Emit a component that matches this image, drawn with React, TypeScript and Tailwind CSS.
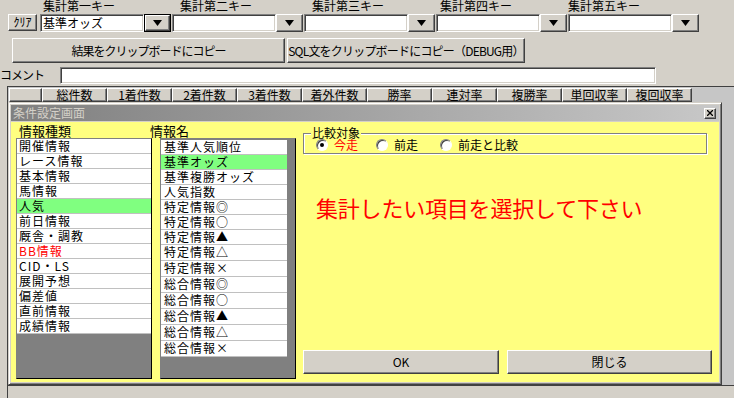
import React from "react";

const raised =
  "border border-t-white border-l-white border-r-[#404040] border-b-[#404040] shadow-[inset_-1px_-1px_0_#808080] bg-[#d4d0c8]";
const sunken =
  "border border-t-[#808080] border-l-[#808080] border-r-white border-b-white shadow-[inset_1px_1px_0_#404040,inset_-1px_-1px_0_#d4d0c8]";

const keys = [
  { label: "集計第一キー", pad: "pl-[3px]", value: "基準オッズ", focused: true },
  { label: "集計第二キー", pad: "pl-[8px]", value: "", focused: false },
  { label: "集計第三キー", pad: "pl-[8px]", value: "", focused: false },
  { label: "集計第四キー", pad: "pl-[4px]", value: "", focused: false },
  { label: "集計第五キー", pad: "pl-0", value: "", focused: false },
];

const headers = ["総件数", "1着件数", "2着件数", "3着件数", "着外件数", "勝率", "連対率", "複勝率", "単回収率", "複回収率"];

const kinds = ["開催情報", "レース情報", "基本情報", "馬情報", "人気", "前日情報", "厩舎・調教", "BB情報", "CID・LS", "展開予想", "偏差値", "直前情報", "成績情報"];

const names = [
  "基準人気順位", "基準オッズ", "基準複勝オッズ", "人気指数",
  "特定情報◎", "特定情報○", "特定情報▲", "特定情報△", "特定情報×",
  "総合情報◎", "総合情報○", "総合情報▲", "総合情報△", "総合情報×",
];

function Arrow() {
  return (
    <svg width="9" height="7" viewBox="0 0 9 7">
      <polygon points="0,0 9,0 4.5,6" fill="#000" />
    </svg>
  );
}

function Combo({ value, focused }: { value: string; focused: boolean }) {
  return (
    <div className="flex h-[18px] w-[131px]">
      <div className={`w-[104px] bg-white ${sunken} text-[12px] leading-[15px] pl-[2px] whitespace-nowrap`}>
        {value}
      </div>
      {focused ? (
        <div className="w-[27px] border border-black">
          <div className={`h-full flex items-center justify-center ${raised}`}>
            <Arrow />
          </div>
        </div>
      ) : (
        <div className={`w-[27px] flex items-center justify-center ${raised}`}>
          <Arrow />
        </div>
      )}
    </div>
  );
}

function Radio({ label, checked, red, width }: { label: string; checked?: boolean; red?: boolean; width: string }) {
  return (
    <div className={`flex items-center ${width}`}>
      <div className="w-[12px] h-[12px] rounded-full border border-t-[#808080] border-l-[#808080] border-r-white border-b-white bg-white flex items-center justify-center shadow-[inset_1px_1px_0_#404040]">
        {checked && <div className="w-[4px] h-[4px] rounded-full bg-black" />}
      </div>
      <span className={`ml-[6px] text-[12px] leading-[13px] ${red ? "text-[#ff0000]" : "text-black"}`}>{label}</span>
    </div>
  );
}

export default function App() {
  return (
    <div className="relative w-[734px] h-[398px] overflow-hidden bg-[#d4d0c8] text-black font-['Noto_Sans_CJK_JP',sans-serif]">
      {/* key labels */}
      <div className="flex h-[14px] pl-[40px] gap-[1px]">
        {keys.map((k) => (
          <div key={k.label} className={`w-[131px] ${k.pad} text-[12px] leading-[12px]`}>
            {k.label}
          </div>
        ))}
      </div>

      {/* combos */}
      <div className="flex h-[18px] pl-[8px]">
        <div className={`w-[29px] h-[17px] ${raised} text-[12px] leading-[14px] flex justify-center`}>ｸﾘｱ</div>
        <div className="flex gap-[1px] ml-[3px]">
          {keys.map((k) => (
            <Combo key={k.label} value={k.value} focused={k.focused} />
          ))}
        </div>
      </div>

      {/* copy buttons */}
      <div className="flex mt-[6px] h-[25px] pl-[12px] gap-[2px]">
        <div className={`w-[273px] ${raised} flex items-center justify-center text-[12px] tracking-[-1px]`}>
          結果をクリップボードにコピー
        </div>
        <div className={`w-[238px] ${raised} flex items-center justify-center text-[12px] tracking-[-0.8px]`}>
          SQL文をクリップボードにコピー（DEBUG用）
        </div>
      </div>

      {/* comment */}
      <div className="flex mt-[4px] h-[17px]">
        <div className="w-[60px] text-[12px] leading-[14px] tracking-[-1px] pt-[1px]">コメント</div>
        <div className={`w-[596px] bg-white ${sunken}`} />
      </div>

      {/* grid */}
      <div className="mt-[2px] ml-[7px] h-[299px] border-l border-t border-[#404040] bg-[#c6c6c6] pt-[1px] pl-[1px]">
        <div className="flex h-[14px]">
          <div className={`w-[33px] ${raised}`} />
          {headers.map((h) => (
            <div key={h} className={`w-[65px] ${raised} flex items-center justify-center text-[12px] leading-[12px]`}>
              {h}
            </div>
          ))}
        </div>
      </div>
      <div className="ml-[7px] h-[14px] border-l border-t border-[#404040] bg-[#d4d0c8]" />

      {/* dialog */}
      <div className="absolute left-[8px] top-[102px] w-[714px] h-[283px] flex flex-col border border-t-[#d4d0c8] border-l-[#d4d0c8] border-r-[#404040] border-b-[#404040] shadow-[inset_1px_1px_0_#fff,inset_-1px_-1px_0_#808080] p-[2px] bg-[#d4d0c8]">
        <div className="h-[16px] flex items-center bg-gradient-to-r from-[#808080] to-[#c8c8c8] pl-[2px] pr-[3px]">
          <span className="text-[12px] leading-[14px] text-[#d4d0c8] flex-1">条件設定画面</span>
          <div className={`w-[12px] h-[11px] ${raised} flex items-center justify-center`}>
            <svg width="6" height="6" viewBox="0 0 6 6">
              <path d="M0 0L6 6M6 0L0 6" stroke="#000" strokeWidth="1.3" />
            </svg>
          </div>
        </div>
        <div className="mt-[1px] flex-1 bg-[#ffff80] flex pl-[5px] pt-[2px]">
          {/* 情報種類 */}
          <div className="w-[136px] flex flex-col">
            <div className="h-[14px] pl-[3px] text-[13px] leading-[14px]">情報種類</div>
            <div className="h-[241px] border border-t-[#808080] border-l-[#808080] border-r-black border-b-black bg-[#808080]">
              {kinds.map((k) => (
                <div
                  key={k}
                  className={`h-[15px] w-[134px] border-b border-[#c0c0c0] pl-[2px] text-[12px] leading-[14px] tracking-[1px] ${
                    k === "人気" ? "bg-[#80ff80]" : "bg-white"
                  } ${k === "BB情報" ? "text-[#ff0000]" : "text-black"}`}
                >
                  {k}
                </div>
              ))}
            </div>
          </div>

          {/* 情報名 */}
          <div className="w-[136px] ml-[8px] flex flex-col">
            <div className="h-[14px] -ml-[10px] text-[13px] leading-[14px]">情報名</div>
            <div className="h-[241px] border border-t-[#808080] border-l-[#808080] border-r-black border-b-black bg-[#808080] pt-[1px]">
              {names.map((n, i) => (
                <div
                  key={n}
                  className={`${i < 7 ? "h-[15px]" : "h-[16px]"} w-[126px] border-b border-[#c0c0c0] pl-[3px] text-[12px] leading-[14px] tracking-[1px] ${
                    n === "基準オッズ" ? "bg-[#80ff80]" : "bg-white"
                  }`}
                >
                  {n}
                </div>
              ))}
            </div>
          </div>

          {/* right panel */}
          <div className="w-[409px] ml-[7px] flex flex-col">
            <div className="relative mt-[9px] h-[21px] w-[404px] border border-[#808080] shadow-[inset_1px_1px_0_#fff,1px_1px_0_#fff]">
              <span className="absolute -top-[8px] left-[7px] px-[1px] bg-[#ffff80] text-[12px] leading-[13px]">比較対象</span>
              <div className="flex items-center h-full pl-[12px] pt-[2px]">
                <Radio label="今走" checked red width="w-[60px]" />
                <Radio label="前走" width="w-[64px]" />
                <Radio label="前走と比較" width="w-[90px]" />
              </div>
            </div>
            <div className="mt-[41px] pl-[13px] text-[22px] leading-[24px] text-[#ff0000] tracking-[-0.2px]">
              集計したい項目を選択して下さい
            </div>
            <div className="mt-auto mb-[8px] flex gap-[8px]">
              <div className={`w-[196px] h-[24px] ${raised} flex items-center justify-center text-[12px]`}>OK</div>
              <div className={`w-[205px] h-[24px] ${raised} flex items-center justify-center text-[12px]`}>閉じる</div>
            </div>
          </div>
        </div>
      </div>
    </div>
  );
}
